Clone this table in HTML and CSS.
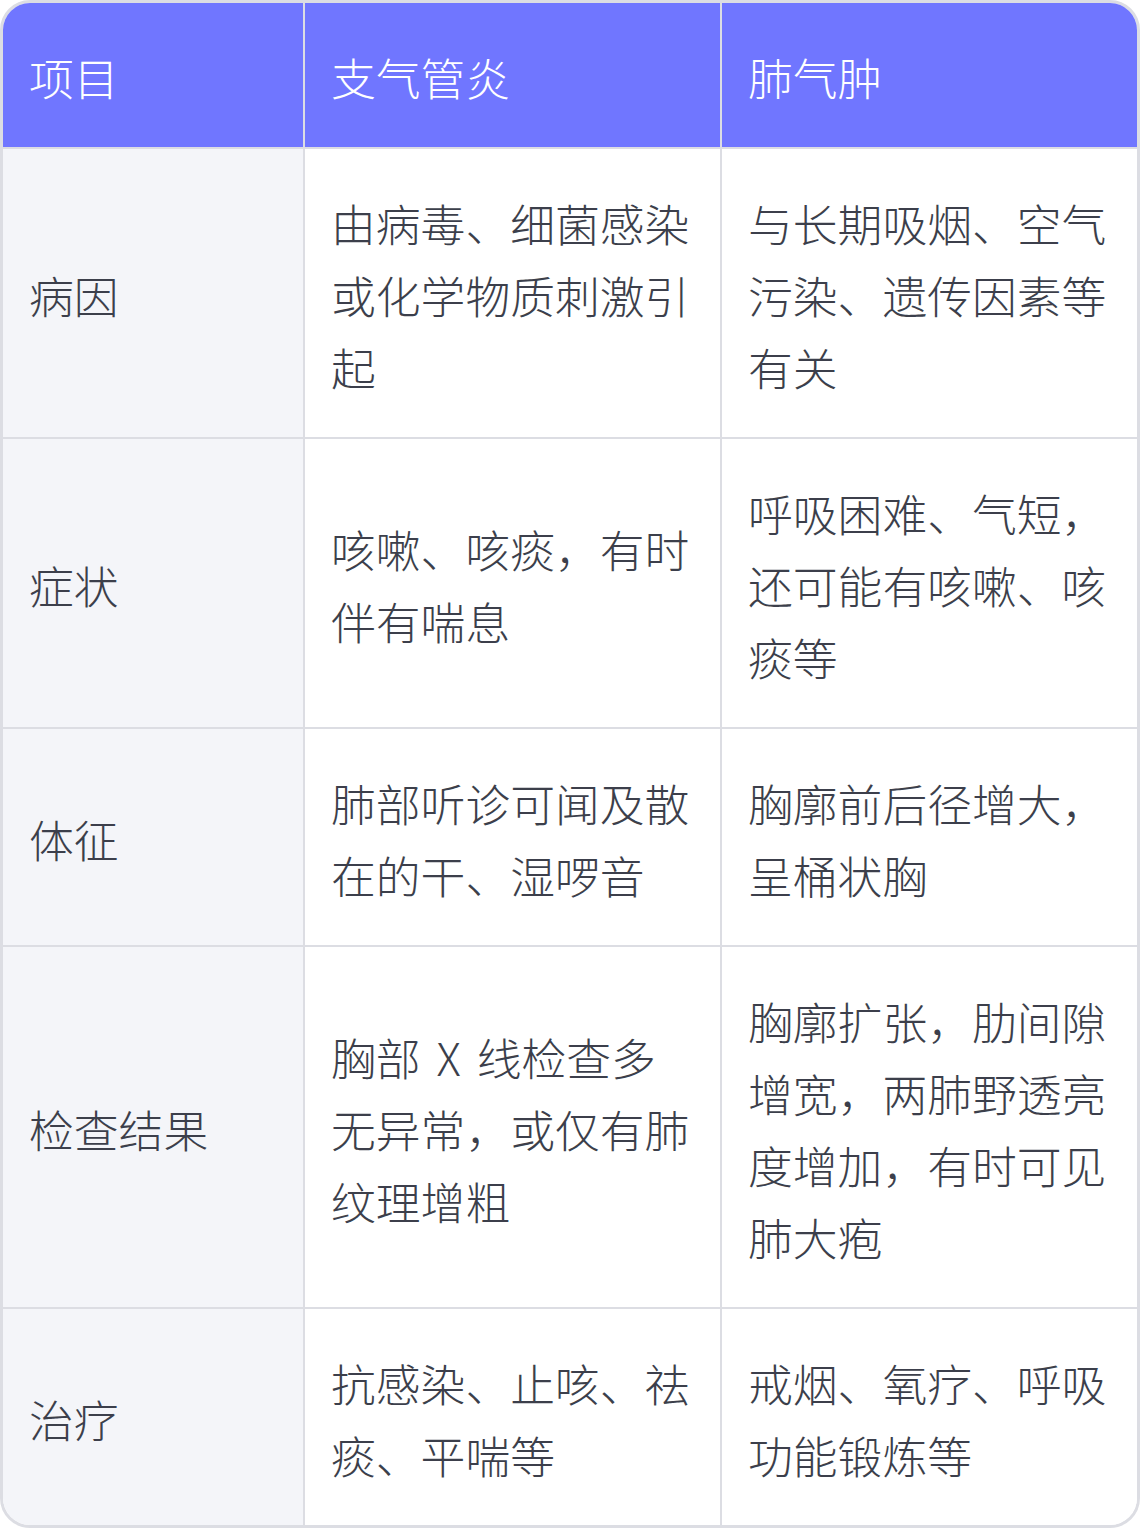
FILE: index.html
```html
<!DOCTYPE html>
<html lang="zh-CN">
<head>
<meta charset="utf-8">
<link rel="stylesheet" href="styles.css">
</head>
<body>
<div class="wrap">
<table class="cmp">
<colgroup><col class="c1"><col class="c2"><col class="c3"></colgroup>
<thead>
<tr><th>项目</th><th>支气管炎</th><th>肺气肿</th></tr>
</thead>
<tbody>
<tr><td>病因</td><td>由病毒、细菌感染或化学物质刺激引起</td><td>与长期吸烟、空气污染、遗传因素等有关</td></tr>
<tr><td>症状</td><td>咳嗽、咳痰，有时伴有喘息</td><td>呼吸困难、气短，还可能有咳嗽、咳痰等</td></tr>
<tr><td>体征</td><td>肺部听诊可闻及散在的干、湿啰音</td><td>胸廓前后径增大，呈桶状胸</td></tr>
<tr><td>检查结果</td><td>胸部 X 线检查多无异常，或仅有肺纹理增粗</td><td>胸廓扩张，肋间隙增宽，两肺野透亮度增加，有时可见肺大疱</td></tr>
<tr><td>治疗</td><td>抗感染、止咳、祛痰、平喘等</td><td>戒烟、氧疗、呼吸功能锻炼等</td></tr>
</tbody>
</table>
</div>
</body>
</html>
```
FILE: styles.css
```css
html, body {
  margin: 0;
  padding: 0;
  background: #ffffff;
}
.wrap {
  width: 1140px;
  height: 1528px;
  box-sizing: border-box;
  border: 3px solid #dcdde3;
  border-radius: 30px;
  overflow: hidden;
}
.cmp {
  width: 1134px;
  table-layout: fixed;
  border-collapse: separate;
  border-spacing: 0;
  font-family: "Noto Sans CJK SC", "Noto Sans", sans-serif;
  font-size: 44.8px;
  line-height: 72px;
  font-weight: 300;
  word-spacing: 6px;
}
.c1 { width: 302px; }
.c2 { width: 417px; }
.c3 { width: 415px; }
.cmp th, .cmp td {
  padding: 38px 30px 34px 26px;
  text-align: left;
  vertical-align: middle;
  border-right: 2px solid #dcdde3;
  border-bottom: 2px solid #dcdde3;
  word-break: break-all;
}
.cmp th:last-child, .cmp td:last-child { border-right: none; }
.cmp tbody tr:last-child td { border-bottom: none; }
.cmp th {
  background: #7076ff;
  color: #ffffff;
  font-weight: 300;
}
.cmp td {
  color: #3c3f4b;
  background: #ffffff;
}
.cmp td:first-child {
  background: #f4f5f9;
}
```
